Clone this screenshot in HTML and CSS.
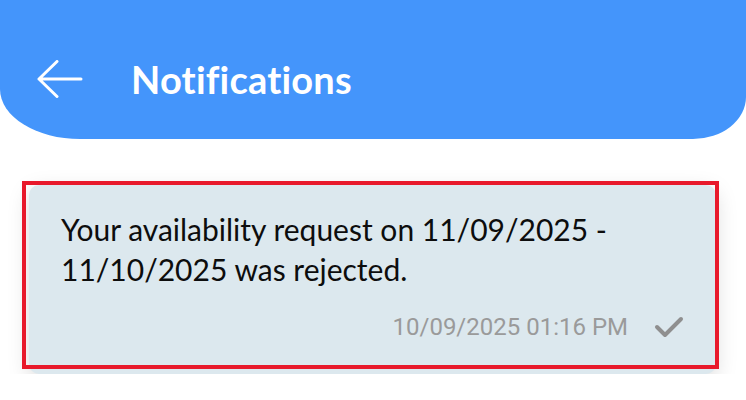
FILE: index.html
```html
<!DOCTYPE html>
<html lang="en">
<head>
  <meta charset="UTF-8" />
  <meta name="viewport" content="width=device-width, initial-scale=1.0"/>
  <title>Notifications</title>
  <link rel="stylesheet" href="styles.css">
</head>
<body>
  <div class="topbar">
    <button class="back" aria-label="Back">
      <svg width="46" height="38" viewBox="0 0 46 38">
        <path d="M44 19H2M20 1.5L2 19l18 17.5" fill="none" stroke="#fff" stroke-width="3" stroke-linecap="round" stroke-linejoin="round"/>
      </svg>
    </button>
    <h1 class="title">Notifications</h1>
  </div>

  <div class="list">
    <div class="note">
      <p class="note-text">Your availability request on 11/09/2025 - 11/10/2025 was rejected.</p>
      <div class="note-meta">
        <span class="time">10/09/2025 01:16 PM</span>
        <svg class="tick" width="30" height="22" viewBox="0 0 30 22">
          <path d="M3 11l8 8L27 3" fill="none" stroke="#8f8f8f" stroke-width="4" stroke-linecap="round" stroke-linejoin="round"/>
        </svg>
      </div>
    </div>
  </div>
</body>
</html>
```

FILE: styles.css
```css
:root {
  --blue: #4495fb;
  --card: #dce8ee;
  --text-color: #0d0d0d;
  --muted: #9a9a9a;
  --mark: #e8192b;
}

body {
  margin: 0;
  padding: 0;
  background: #fff;
  font-family: Lato, "Open Sans", sans-serif;
  color: var(--text-color);
}

.topbar {
  height: 139px;
  box-sizing: border-box;
  padding: 18px 0 0 37px;
  background: var(--blue);
  border-radius: 0 0 53px 80px / 0 0 42px 50px;
  display: flex;
  align-items: center;
  gap: 48px;
}

.back {
  background: none;
  border: none;
  padding: 0;
  display: flex;
  cursor: pointer;
}

.title {
  margin: 0;
  color: #fff;
  font-size: 38px;
  font-weight: 700;
  letter-spacing: 0.2px;
}

.list {
  padding: 46px 30px 0 29px;
}

.note {
  position: relative;
  background: var(--card);
  border-radius: 10px;
  box-shadow: 0 6px 22px rgba(0, 0, 0, 0.15);
  padding: 24px 32px 33px 32px;
}

/* highlight box drawn over the card */
.note::after {
  content: "";
  position: absolute;
  top: -4px;
  left: -7px;
  right: -3px;
  bottom: 5px;
  border: 4px solid var(--mark);
}

.note-text {
  margin: 0;
  font-size: 30px;
  line-height: 40px;
}

.note-meta {
  display: flex;
  justify-content: flex-end;
  align-items: center;
  gap: 26px;
  margin-top: 24px;
}

.time {
  font-family: Roboto, sans-serif;
  font-size: 24px;
  color: var(--muted);
}

.tick {
  display: block;
}
```
